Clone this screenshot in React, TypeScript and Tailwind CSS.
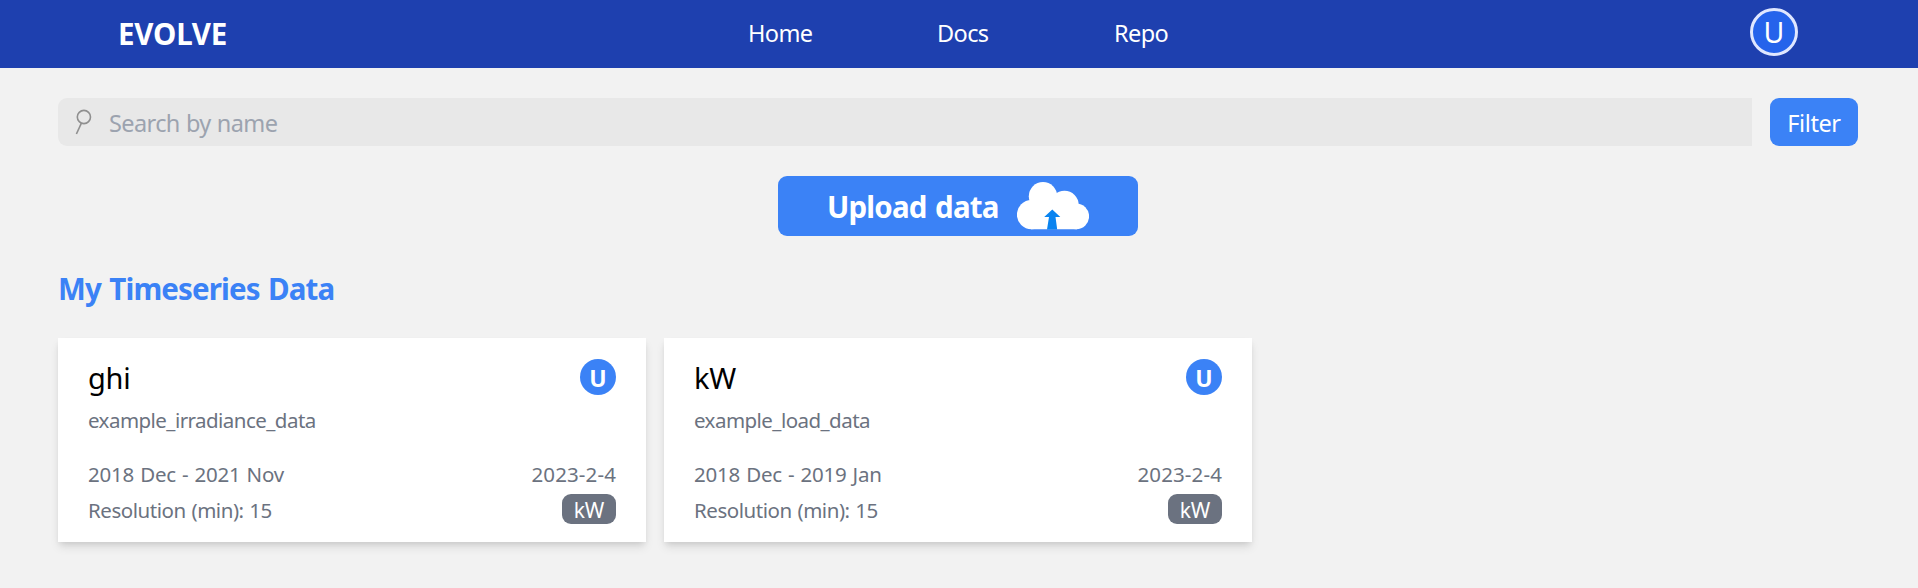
type Series = {
  name: string;
  description: string;
  range: string;
  created: string;
  unit: string;
};

const series: Series[] = [
  { name: "ghi", description: "example_irradiance_data", range: "2018 Dec - 2021 Nov", created: "2023-2-4", unit: "kW" },
  { name: "kW", description: "example_load_data", range: "2018 Dec - 2019 Jan", created: "2023-2-4", unit: "kW" },
];

function SearchIcon() {
  return (
    <svg className="h-[26px] w-[18px] shrink-0" viewBox="0 0 18 26" fill="none" stroke="#8f8f8f" strokeWidth="1.6">
      <circle cx="9.9" cy="8" r="6.6" />
      <path d="M7.4 14.2 2.4 25" />
    </svg>
  );
}

function CloudUploadIcon() {
  return (
    <svg className="h-12 w-[72px] shrink-0" viewBox="0 0 72 48">
      <g fill="#fff">
        <circle cx="14.5" cy="32.6" r="14.6" />
        <circle cx="26" cy="14.2" r="14.2" />
        <circle cx="47.5" cy="23" r="14.2" />
        <circle cx="59.2" cy="34.3" r="12.9" />
        <path d="M14 20h32l14 8v19.2H14z" />
      </g>
      <path fill="#0a84f0" d="M35.3 27.4 43.3 35h-4.8l1.7 12.4H30L32 35h-4.8z" />
    </svg>
  );
}

function NavBar() {
  return (
    <header className="flex h-[68px] items-center justify-between bg-[#1e40af] pl-[118px] pr-[120px] text-white">
      <div className="w-[320px] text-[29.5px] font-bold leading-[68px] tracking-[-0.2px]">EVOLVE</div>
      <nav className="flex flex-1 pb-0.5 pl-[310px] text-[23.5px] leading-[66px] tracking-[-0.6px]">
        <a className="w-[189px]">Home</a>
        <a className="w-[177px]">Docs</a>
        <a>Repo</a>
      </nav>
      <div className="mb-1 flex h-12 w-12 items-center justify-center rounded-full border-[3px] border-[#e0e7ff] bg-[#2563eb] text-[28.5px] leading-none">
        U
      </div>
    </header>
  );
}

function SeriesCard({ item }: { item: Series }) {
  return (
    <article className="flex h-[204px] w-[588px] flex-col bg-white px-[30px] pt-[21px] text-[20.5px] leading-9 text-[#6b7280] shadow-[0_6px_9px_-1px_rgba(0,0,0,0.1),0_3px_6px_-2px_rgba(0,0,0,0.1)]">
      <div className="flex h-9 items-start justify-between">
        <h2 className="text-[29px] leading-[38px] tracking-[-0.3px] text-black">{item.name}</h2>
        <span className="flex h-9 w-9 items-center justify-center rounded-full bg-[#3b82f6] pt-0.5 text-[23px] font-bold leading-none text-white">
          U
        </span>
      </div>
      <p className="mt-[7px] h-9 tracking-[-0.54px]">{item.description}</p>
      <div className="mt-[18px] flex justify-between">
        <span className="tracking-[-0.22px] [word-spacing:1px]">{item.range}</span>
        <span className="tracking-[0.12px]">{item.created}</span>
      </div>
      <div className="flex items-start justify-between">
        <span className="tracking-[-0.45px] [word-spacing:0.8px]">Resolution (min): 15</span>
        <span className="mt-0.5 flex h-[30px] w-[54px] items-center justify-center rounded-[9px] bg-[#6b7280] pt-0.5 text-[21px] tracking-[-0.2px] text-white">
          {item.unit}
        </span>
      </div>
    </article>
  );
}

export default function App() {
  return (
    <div className="h-[588px] w-full overflow-hidden bg-[#f2f2f2] font-['Noto_Sans','Open_Sans',sans-serif]">
      <NavBar />
      <main className="px-[58px] pt-[30px]">
        <div className="flex h-12 w-[1800px] gap-[18px]">
          <label className="flex flex-1 items-center gap-[17px] rounded-l-[9px] bg-[#e8e8e8] pl-[16px]">
            <SearchIcon />
            <span className="pt-0.5 text-[23.5px] leading-[46px] tracking-[-0.6px] text-[#9ca3af] [word-spacing:0.6px]">
              Search by name
            </span>
          </label>
          <button className="w-[88px] rounded-[9px] bg-[#3b82f6] pt-0.5 text-[23.5px] leading-[46px] tracking-[-0.4px] text-white">
            Filter
          </button>
        </div>
        <button className="ml-[720px] mt-[30px] flex h-[60px] w-[360px] items-start rounded-[9px] bg-[#3b82f6] pl-[49px] text-white">
          <span className="w-[190px] pt-px text-left text-[29.5px] font-bold leading-[60px] tracking-[-0.8px] [word-spacing:1.5px]">
            Upload data
          </span>
          <span className="pt-1.5">
            <CloudUploadIcon />
          </span>
        </button>
        <h1 className="mt-[30px] h-[45px] text-[29.5px] font-bold leading-[45px] tracking-[-0.86px] text-[#3b82f6] [word-spacing:1.5px]">
          My Timeseries Data
        </h1>
        <section className="mt-[27px] flex gap-[18px]">
          {series.map((item) => (
            <SeriesCard key={item.name} item={item} />
          ))}
        </section>
      </main>
    </div>
  );
}
